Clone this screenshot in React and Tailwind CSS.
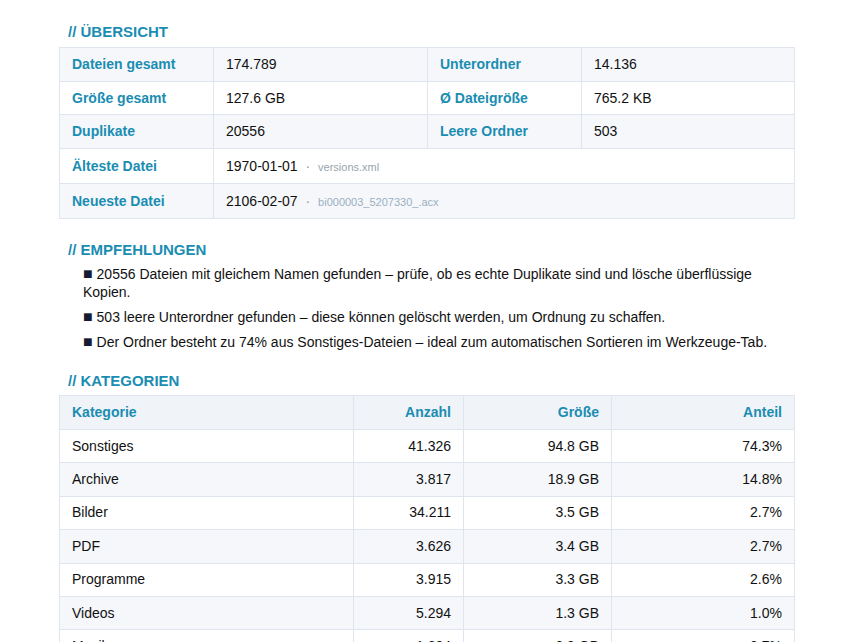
export default function App() {
  const H = "text-[15px] font-bold text-[#1a8db2] leading-[18px]";
  const lab = "px-3 font-bold text-[#1a8db2] border border-[#dfe5ee]";
  const val = "px-3 text-[#111] border border-[#dfe5ee]";
  const sq = <span className="text-[#151b33] text-[16px] leading-[16px]">■</span>;
  const cats = [
    ["Sonstiges", "41.326", "94.8 GB", "74.3%"],
    ["Archive", "3.817", "18.9 GB", "14.8%"],
    ["Bilder", "34.211", "3.5 GB", "2.7%"],
    ["PDF", "3.626", "3.4 GB", "2.7%"],
    ["Programme", "3.915", "3.3 GB", "2.6%"],
    ["Videos", "5.294", "1.3 GB", "1.0%"],
    ["Musik", "1.204", "0.9 GB", "0.7%"],
  ];
  return (
    <div className="bg-white w-[856px] h-[642px] overflow-hidden text-[14px]" style={{ fontFamily: '"Liberation Sans", Arial, sans-serif' }}>
      <div className="pl-[59px] w-[795px] pt-[23px]">
        <div className={H + " pl-[9px]"}>// ÜBERSICHT</div>
        <table className="w-[736px] mt-[6px] border-collapse table-fixed">
          <colgroup><col className="w-[154px]" /><col className="w-[214px]" /><col className="w-[154px]" /><col /></colgroup>
          <tbody>
            <tr className="h-[34px] bg-[#f5f7fa]"><td className={lab}>Dateien gesamt</td><td className={val}>174.789</td><td className={lab}>Unterordner</td><td className={val}>14.136</td></tr>
            <tr className="h-[33px]"><td className={lab}>Größe gesamt</td><td className={val}>127.6 GB</td><td className={lab}>Ø Dateigröße</td><td className={val}>765.2 KB</td></tr>
            <tr className="h-[34px] bg-[#f5f7fa]"><td className={lab}>Duplikate</td><td className={val}>20556</td><td className={lab}>Leere Ordner</td><td className={val}>503</td></tr>
            <tr className="h-[35px]"><td className={lab}>Älteste Datei</td><td className={val} colSpan={3}>1970-01-01 <span className="text-[#999] mx-[4px]">·</span> <span className="text-[11px] text-[#9aa3ad]">versions.xml</span></td></tr>
            <tr className="h-[35px] bg-[#f5f7fa]"><td className={lab}>Neueste Datei</td><td className={val} colSpan={3}>2106-02-07 <span className="text-[#999] mx-[4px]">·</span> <span className="text-[11px] text-[#9ab0c4]">bi000003_5207330_.acx</span></td></tr>
          </tbody>
        </table>
        <div className={H + " pl-[9px] mt-[22px]"}>// EMPFEHLUNGEN</div>
        <ul className="pl-[24px] mt-[6px] text-[#111] leading-[18px] flex flex-col gap-[7px]">
          <li>{sq} 20556 Dateien mit gleichem Namen gefunden – prüfe, ob es echte Duplikate sind und lösche überflüssige Kopien.</li>
          <li>{sq} 503 leere Unterordner gefunden – diese können gelöscht werden, um Ordnung zu schaffen.</li>
          <li>{sq} Der Ordner besteht zu 74% aus Sonstiges-Dateien – ideal zum automatischen Sortieren im Werkzeuge-Tab.</li>
        </ul>
        <div className={H + " pl-[9px] mt-[21px]"}>// KATEGORIEN</div>
        <table className="w-[736px] mt-[5px] border-collapse table-fixed">
          <colgroup><col className="w-[294px]" /><col className="w-[110px]" /><col className="w-[148px]" /><col /></colgroup>
          <thead>
            <tr className="h-[34px] bg-[#f0f3f7]">
              <th className={lab + " text-left"}>Kategorie</th>
              <th className={lab + " text-right"}>Anzahl</th>
              <th className={lab + " text-right"}>Größe</th>
              <th className={lab + " text-right"}>Anteil</th>
            </tr>
          </thead>
          <tbody>
            {cats.map((c, i) => (
              <tr key={i} className={"h-[33.4px] " + (i % 2 ? "bg-[#f5f7fa]" : "bg-white")}>
                <td className={val}>{c[0]}</td>
                <td className={val + " text-right"}>{c[1]}</td>
                <td className={val + " text-right"}>{c[2]}</td>
                <td className={val + " text-right"}>{c[3]}</td>
              </tr>
            ))}
          </tbody>
        </table>
      </div>
    </div>
  );
}
